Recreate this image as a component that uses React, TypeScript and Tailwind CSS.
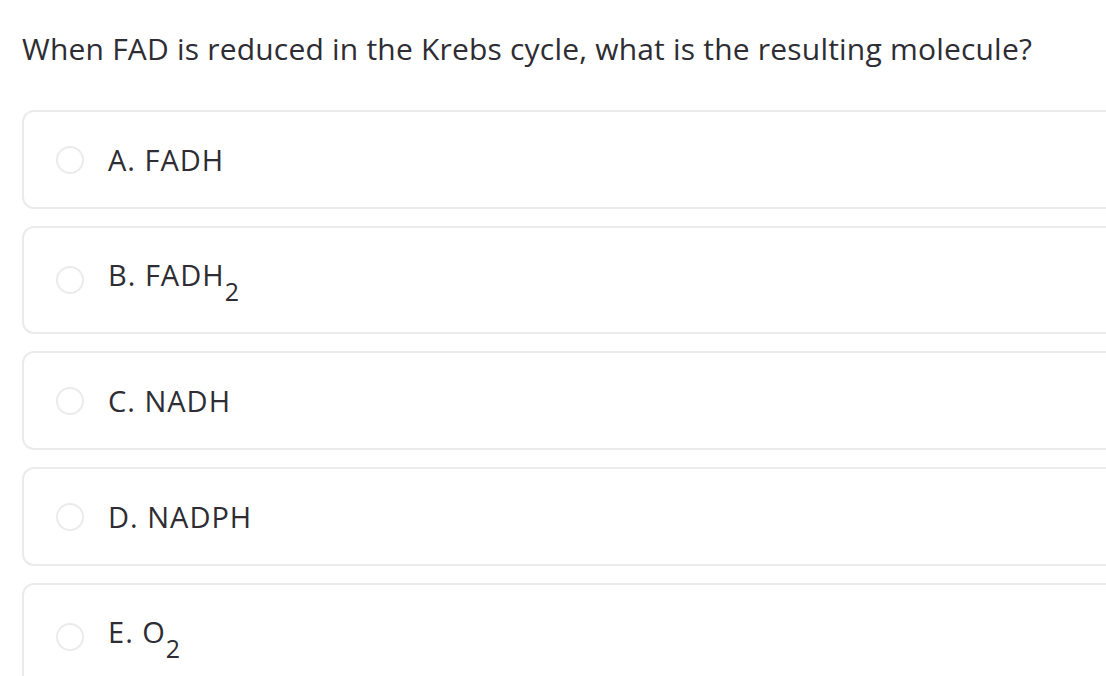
const options = [
  { key: "A", label: "FADH", sub: "" },
  { key: "B", label: "FADH", sub: "2" },
  { key: "C", label: "NADH", sub: "" },
  { key: "D", label: "NADPH", sub: "" },
  { key: "E", label: "O", sub: "2" },
];

export default function App() {
  return (
    <div
      className="w-[1106px] h-[676px] overflow-hidden bg-white text-[#2d2d33]"
      style={{ fontFamily: "'Open Sans', Lato, sans-serif" }}
    >
      <div className="pl-[22px] pt-[30px]">
        <h1 className="text-[30px] leading-[38px] font-normal tracking-[0.2px]">
          When FAD is reduced in the Krebs cycle, what is the resulting molecule?
        </h1>

        <div className="mt-[42px] flex flex-col gap-[17px] mr-[-40px]">
          {options.map((o) => (
            <div
              key={o.key}
              className="flex items-center min-h-[99px] border-2 border-[#ebebec] rounded-[12px] pl-[32px] py-[28px]"
            >
              <span className="w-[28px] h-[28px] rounded-full border-2 border-[#ebebec] shrink-0" />
              <span className="ml-[24px] text-[29px] leading-[38px] tracking-[1px]">
                {o.key}. {o.label}
                {o.sub && <sub className="text-[25px] align-[-9px] leading-[38px]">{o.sub}</sub>}
              </span>
            </div>
          ))}
        </div>
      </div>
    </div>
  );
}
